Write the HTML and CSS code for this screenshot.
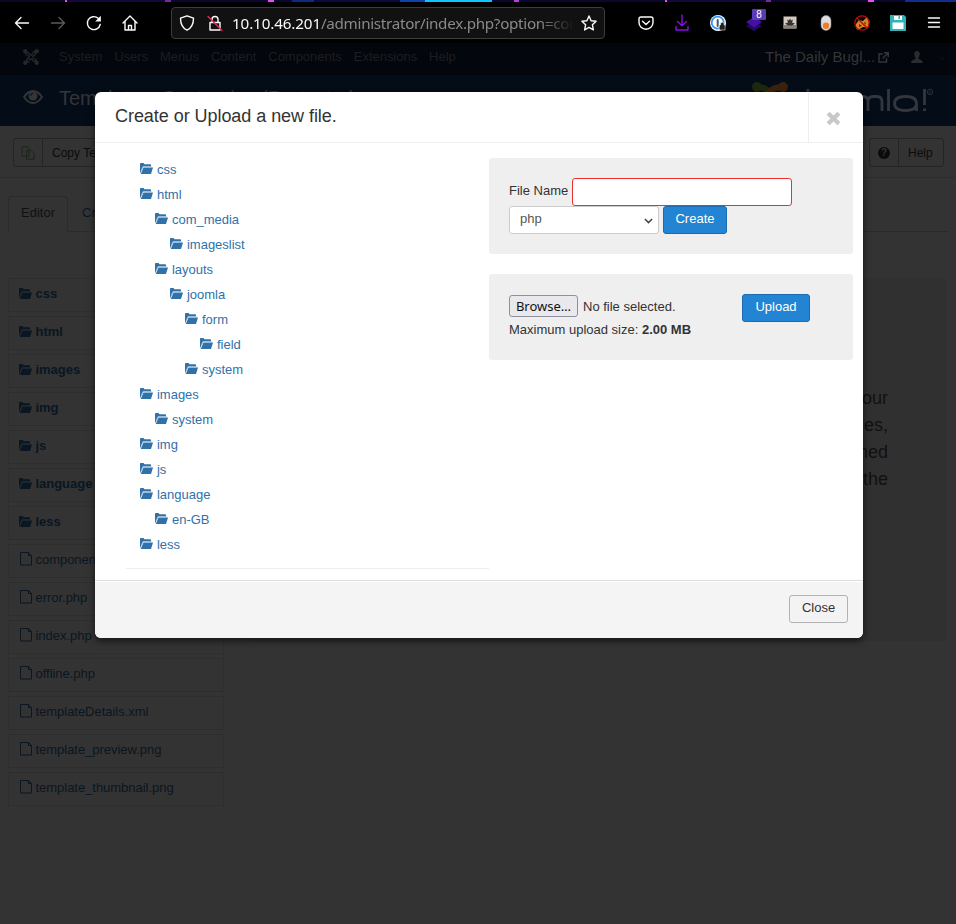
FILE: index.html
```html
<!DOCTYPE html>
<html lang="en">
<head>
<meta charset="utf-8">
<title>Templates: Customise (Protostar)</title>
<link rel="stylesheet" href="styles.css">
</head>
<body>
<svg width="0" height="0" class="defs">
  <symbol id="folder" viewBox="0 0 13 11"><path d="M0 10.500V.8Q0 0 .8 0H3.500l1 1.200h5.700q.8 0 .8.8v1.500H3.300L.7 9z"/><path d="M3.500 4.400h9.500L11 11H.8z"/><path class="fold" d="M1 8.500L2.800 3.800h9"/></symbol>
  <symbol id="file" viewBox="0 0 12 14"><path fill="none" stroke="currentColor" d="M.5.5h8l3 3v9.500H.5zM8.500 .5v3h3"/></symbol>
</svg>
<div class="strip"></div>
<header class="browser">
  <svg class="ico nav1" viewBox="0 0 16 16"><path d="M14.500 8H1.500M7 2.500L1.500 8 7 13.500"/></svg>
  <svg class="ico nav2" viewBox="0 0 16 16"><path d="M1.500 8h13M9 2.500L14.500 8 9 13.500"/></svg>
  <svg class="ico nav3" viewBox="0 0 16 16"><path d="M14.200 9.500a6.500 6.500 0 1 1-2-6.200L14 5"/><path class="solid" d="M14.800 .8v5.700H9.200z"/></svg>
  <svg class="ico nav4" viewBox="0 0 16 16"><path d="M1 8l7-7 7 7M3 6.500V15h10V6.500M6.500 15v-4.500h3V15"/></svg>
  <div class="url">
    <svg class="ico" viewBox="0 0 16 16"><path d="M8 .8L14.500 3.200C14.500 9 12.500 13 8 15.200 3.500 13 1.500 9 1.500 3.200z"/></svg>
    <svg class="ico lock" viewBox="0 0 16 16"><path d="M3 7.500h10V15H3zM5 7.500V4.500a3 3 0 0 1 6 0v3"/><path class="slash" d="M1 1.500l14 14"/></svg>
    <span class="addr"><b>10.10.46.201</b>/administrator/index.php?option=com</span>
    <svg class="ico" viewBox="0 0 16 16"><path d="M8 1l2.100 4.700 5 .6-3.700 3.500 1 5.100L8 12.400l-4.400 2.500 1-5.100L.9 6.300l5-.6z"/></svg>
  </div>
  <div class="exts">
    <svg class="ico" viewBox="0 0 16 16"><path d="M3 2h10q2 0 2 2v3.500a7 6.700 0 0 1-14 0V4q0-2 2-2z"/><path d="M4.500 6.300L8 9.500l3.500-3.200"/></svg>
    <svg class="ico dl" viewBox="0 0 16 16"><path d="M8 0v10.500M3.500 6.500L8 10.800l4.500-4.300M2 11.500V15h12v-3.500"/></svg>
    <svg class="ico flat" viewBox="0 0 16 16"><circle cx="8" cy="8" r="8" fill="#fff"/><circle cx="7.700" cy="7.700" r="6" fill="#fff" stroke="#3a93ee" stroke-width="1.800"/><path stroke="#456" stroke-width="2" d="M7.700 5v6"/><path fill="#222" stroke="#fff" stroke-width=".5" d="M9.500 10h1V9a1.800 1.800 0 0 1 3.600 0v1h1v5H9.500z"/></svg>
    <span class="badged"><svg class="ico flat" viewBox="0 0 16 16"><path fill="#20096c" d="M0 11l8-4.500 8 4.500-8 5z"/><path fill="#4510a3" d="M0 7l8-5 8 5-8 5.500z"/></svg><i>8</i></span>
    <svg class="ico flat" viewBox="0 0 16 16"><path fill="#d5c9c0" d="M1.500 1.500h13v12h-13z"/><path fill="#8a817c" d="M1.500 10h13v3.500h-13z"/><path fill="#333" d="M3 8.500l3-1-1-3 2 1 1-2 1 2 2-1-1 3 3 1-3 2H6z"/></svg>
    <svg class="ico flat" viewBox="0 0 16 16"><rect x="3" y="0.500" width="10" height="15" rx="5" fill="#ddd" stroke="#888" stroke-width=".5"/><circle cx="8" cy="10.700" r="3.200" fill="#f07c25"/></svg>
    <svg class="ico flat" viewBox="0 0 16 16"><path fill="#d78227" d="M2 9l3-4 4 1 4-4 2.500 4-1.500 7-5-1-5 3-2-2z"/><path fill="#4b2b10" d="M5 9l3 2-3 1zM10 7l2 1-1 2z"/><circle cx="8" cy="8" r="7.200" fill="none" stroke="#b90b0b" stroke-width="1.300"/><path stroke="#b90b0b" stroke-width="1.300" d="M3 3l10 10"/></svg>
    <svg class="ico flat" viewBox="0 0 16 16"><path fill="#32b2b4" d="M0 0h14l2 2v14H0z"/><path fill="#fff" d="M2.500 7.500h11V14h-11zM4 1h8v4H4z"/><path fill="#32b2b4" d="M8.500 1H10v3H8.500z"/></svg>
    <svg class="ico burger" viewBox="0 0 16 16"><path d="M2.500 3h11M2.500 7.500h11M2.500 12h11"/></svg>
  </div>
</header>
<div class="page">
  <nav class="topnav">
    <svg class="jicon" viewBox="0 0 16 16"><g fill="none" stroke="#25272a" stroke-width="1.500"><path d="M3 6.500Q2.500 3.200 5.500 4L11.500 10M9.500 3Q13 2.500 12 5.500L6 11.500M13 9.500Q13.500 12.800 10.500 12L4.500 6M6.500 13Q3 13.500 4 10.500L10 4.500"/></g><g fill="#25272a"><circle cx="2.300" cy="2.300" r="2.200"/><circle cx="13.700" cy="2.300" r="2.200"/><circle cx="2.300" cy="13.700" r="2.200"/><circle cx="13.700" cy="13.700" r="2.200"/></g><path fill="#03060c" d="M8 6.300L9.700 8 8 9.700 6.300 8z"/></svg>
    <span>System</span><span>Users</span><span>Menus</span><span>Content</span><span>Components</span><span>Extensions</span><span>Help</span>
    <div class="site">The Daily Bugl...
      <svg class="extl" viewBox="0 0 11 11"><path d="M5 2H1v8h7.500V6M6 .8h4.200V5M10 1L4.500 6.500"/></svg>
      <svg class="user" viewBox="0 0 12 12"><path d="M6 0c2 0 3 1.500 2.700 3.500C8.500 5.500 7.500 6 7.500 7.500c0 1 4 1 4.500 4.500H0c.5-3.500 4.500-3.500 4.500-4.500C4.500 6 3.500 5.500 3.300 3.500 3 1.500 4 0 6 0z"/></svg>
      <em></em>
    </div>
  </nav>
  <div class="titlebar">
    <svg class="eye" viewBox="0 0 20 14"><path fill="none" stroke="#333538" stroke-width="1.900" d="M1 7Q5 1 10 1t9 6q-4 6-9 6T1 7z"/><circle cx="10" cy="6" r="4.500" fill="#333538"/><path stroke="#020a17" fill="none" d="M7.500 6Q7.500 3.500 10 3.300"/></svg>
    <h1>Templates: Customise (Protostar)</h1>
    <svg class="joomla" viewBox="0 0 184 46"><g fill="none" stroke-width="6" stroke-linecap="round"><path stroke="#1c290e" d="M5 6q7-2 12 4l12 12"/><path stroke="#3a220d" d="M31 6Q23 4 17 10L5 22"/></g><circle cx="5" cy="5" r="5" fill="#1c290e"/><circle cx="31" cy="5" r="5" fill="#3a220d"/>
      <g class="word"><path d="M56 7v22M101 29V20q0-5.500 5-5.500h5q5 0 5 5.500v9M116 20q0-5.500 5-5.500h4q5 0 5 5.500v9M136.500 7v22M164.500 29v-7.500q0-7-11-7t-11 7 11 7 11-7M172.500 7v16M172.500 26.500v2.500"/></g><circle class="reg" cx="178" cy="10" r="2.700"/><text x="176.600" y="12">R</text></svg>
  </div>
  <div class="toolbar">
    <div class="btns"><span class="cell"><svg class="copy" viewBox="0 0 14 14"><path d="M1 .7h5l2 2v7.500H1zM5.500 4.700h5l2.500 2.500v6H5.500z"/></svg></span><span>Copy Template</span></div>
    <div class="btns help"><span class="cell"><i>?</i></span><span>Help</span></div>
  </div>
  <div class="tabs"><span class="tab on">Editor</span><span class="tab">Create Overrides</span></div>
  <div class="cols">
    <ul class="files">
      <li class="dir"><svg><use href="#folder"/></svg>css</li>
      <li class="dir"><svg><use href="#folder"/></svg>html</li>
      <li class="dir"><svg><use href="#folder"/></svg>images</li>
      <li class="dir"><svg><use href="#folder"/></svg>img</li>
      <li class="dir"><svg><use href="#folder"/></svg>js</li>
      <li class="dir"><svg><use href="#folder"/></svg>language</li>
      <li class="dir"><svg><use href="#folder"/></svg>less</li>
      <li><svg><use href="#file"/></svg>component.php</li>
      <li><svg><use href="#file"/></svg>error.php</li>
      <li><svg><use href="#file"/></svg>index.php</li>
      <li><svg><use href="#file"/></svg>offline.php</li>
      <li><svg><use href="#file"/></svg>templateDetails.xml</li>
      <li><svg><use href="#file"/></svg>template_preview.png</li>
      <li><svg><use href="#file"/></svg>template_thumbnail.png</li>
    </ul>
    <div class="hero"><p>our<br>es,<br>ned<br>the</p></div>
  </div>
</div>
<section class="modal">
  <div class="mhead"><h3>Create or Upload a new file.</h3><button class="x"><svg viewBox="0 0 14 14"><path d="M2 2l10 10M12 2L2 12"/></svg></button></div>
  <div class="mbody">
    <ul class="tree">
      <li><svg><use href="#folder"/></svg>css</li>
      <li><svg><use href="#folder"/></svg>html
        <ul>
          <li><svg><use href="#folder"/></svg>com_media
            <ul><li><svg><use href="#folder"/></svg>imageslist</li></ul></li>
          <li><svg><use href="#folder"/></svg>layouts
            <ul><li><svg><use href="#folder"/></svg>joomla
              <ul><li><svg><use href="#folder"/></svg>form
                <ul><li><svg><use href="#folder"/></svg>field</li></ul></li>
              <li><svg><use href="#folder"/></svg>system</li></ul></li></ul></li>
        </ul></li>
      <li><svg><use href="#folder"/></svg>images
        <ul><li><svg><use href="#folder"/></svg>system</li></ul></li>
      <li><svg><use href="#folder"/></svg>img</li>
      <li><svg><use href="#folder"/></svg>js</li>
      <li><svg><use href="#folder"/></svg>language
        <ul><li><svg><use href="#folder"/></svg>en-GB</li></ul></li>
      <li><svg><use href="#folder"/></svg>less</li>
    </ul>
    <div class="forms">
      <div class="well create">
        <div class="row"><label>File Name</label><input type="text" class="name"></div>
        <div class="row"><div class="select">php<svg viewBox="0 0 10 6"><path d="M1 .8l4 4 4-4"/></svg></div><button class="blue">Create</button></div>
      </div>
      <div class="well upload">
        <div><div class="row pick"><button class="browse">Browse…</button><span>No file selected.</span></div>
        <p>Maximum upload size: <b>2.00 MB</b></p></div>
        <button class="blue">Upload</button>
      </div>
    </div>
  </div>
  <div class="mfoot"><button class="close">Close</button></div>
</section>
</body>
</html>
```
FILE: styles.css
```css
* { box-sizing: border-box; }
body { margin: 0; width: 956px; height: 924px; overflow: hidden; position: relative; background: #333; font: 13px/18px "Liberation Sans", Arial, sans-serif; color: #333; }
ul { list-style: none; margin: 0; padding: 0; }
h1, h3, p { margin: 0; font-weight: normal; }
button { font: inherit; }
.defs { position: absolute; }
.strip { height: 2px; background: linear-gradient(90deg, #0c0524 0 65px, #e64bf0 65px 67px, #12083a 67px 165px, #7a2b9a 165px 171px, #0b0630 171px 268px, #e84df2 268px 274px, #0b0630 274px 292px, #0e2a80 292px 314px, #0b0a40 314px 400px, #123fae 400px 425px, #12c3fb 425px 492px, #0b0630 492px 514px, #c13bd8 514px 519px, #0b0630 519px 665px, #e64bf0 665px 667px, #12083a 667px 766px, #7a2b9a 766px 771px, #0b0630 771px 868px, #e84df2 868px 874px, #0b0630 874px 905px, #0e2f8c 905px); }
.browser { height: 41px; background: #000; display: flex; align-items: center; padding: 0 14px; }
.ico { width: 16px; height: 16px; flex: none; fill: none; stroke: #fbfbfe; stroke-width: 1.4; stroke-linecap: round; stroke-linejoin: round; overflow: visible; }
.ico .solid { fill: #fbfbfe; stroke: none; }
.nav2 { margin-left: 20px; stroke: #5b5b5f; }
.nav3, .nav4 { margin-left: 20px; }
.url { width: 434px; height: 32px; margin-left: 33px; border: 1px solid #3c3c3c; border-radius: 4px; background: #111; display: flex; align-items: center; padding: 0 7px; }
.lock { margin-left: 12px; }
.ico .slash { stroke: #e22850; }
.addr { flex: 1; margin: 0 7px 0 9px; overflow: hidden; white-space: nowrap; font: 15.2px/24px "Noto Sans", sans-serif; letter-spacing: -.29px; color: #8a8a8c; -webkit-mask-image: linear-gradient(90deg, #000 90%, transparent); mask-image: linear-gradient(90deg, #000 90%, transparent); }
.addr b { font-weight: normal; color: #fbfbfe; letter-spacing: -.12px; }
.exts { display: flex; gap: 20px; margin-left: 33px; }
.dl { stroke: #8a0de8; }
.flat { stroke: none; }
.badged { position: relative; height: 16px; }
.badged i { position: absolute; left: 6px; top: -6px; width: 14px; height: 11px; background: #5b3bb5; border-radius: 1px; color: #fff; font: 10px/11px "Liberation Sans", sans-serif; text-align: center; }
.topnav { height: 32px; background: #03060c; border-bottom: 1px solid #010409; display: flex; align-items: center; gap: 12px; padding: 0 0 3px 23px; color: #1c1e20; letter-spacing: -.025px; }
.jicon { width: 16px; height: 16px; margin-right: 8px; }
.site { margin-left: auto; width: 191px; font-size: 15px; color: #333538; display: flex; align-items: center; letter-spacing: 0; }
.extl { width: 11px; height: 11px; margin-left: 3px; fill: none; stroke: #333538; stroke-width: 1.500; }
.user { width: 12px; height: 12px; margin-left: 22px; fill: #2a2d30; }
.site em { margin: 4px 0 0 15px; border: 4px solid transparent; border-top-color: #0a0b0d; border-bottom: 0; }
.titlebar { height: 51px; background: #040c18; display: flex; align-items: flex-start; padding: 7px 20px 0 23px; }
.eye { width: 20px; height: 14px; margin-top: 8px; }
.titlebar h1 { font-size: 20px; line-height: 32px; margin-left: 16px; color: #333538; }
.joomla { width: 184px; height: 46px; margin-left: auto; }
.word { fill: none; stroke: #33373d; stroke-width: 2.800; }
.joomla text { fill: #33373d; font-size: 4px; }
.reg { fill: none; stroke: #33373d; stroke-width: .8; }
.toolbar { height: 52px; padding: 12px; border-bottom: 1px solid #2c2c2c; display: flex; justify-content: space-between; align-items: flex-start; }
.btns { height: 29px; display: flex; border: 1px solid #242424; border-radius: 3px; line-height: 28px; font-size: 12px; color: #0b0b0b; margin-left: 1px; }
.btns span { padding: 0 9px; }
.btns .cell { width: 29px; padding: 0; border-right: 1px solid #242424; display: flex; align-items: center; justify-content: center; }
.help { width: 75px; }
.btns i { width: 12px; height: 12px; border-radius: 6px; background: #0b0b0b; color: #333; font: bold 10px/12px "Liberation Sans", sans-serif; text-align: center; }
.copy { width: 14px; height: 14px; fill: none; stroke: #1b2719; }
.tabs { height: 36px; margin: 18px 8px 0; border-bottom: 1px solid #2b2b2b; display: flex; }
.tab { padding: 8px 13px; color: #0a1622; height: 36px; margin-right: 2px; white-space: nowrap; }
.tab.on { width: 60px; margin-right: 1px; border: 1px solid #2b2b2b; border-bottom-color: #333; border-radius: 4px 4px 0 0; padding: 7px 12px; color: #111; }
.cols { display: flex; justify-content: space-between; align-items: flex-start; padding: 46px 9px 0 8px; }
.files { width: 216px; }
.files li { height: 34px; margin-bottom: 4px; border: 1px solid #2e2e2e; display: flex; align-items: flex-start; padding: 6px 10px; color: #0a1622; letter-spacing: -.03px; }
.files svg { width: 12px; height: 14px; margin: 1px 4px 0 .5px; }
.files .dir { font-weight: bold; --fold: #1d2a35; }
.files .dir svg { width: 13px; height: 11px; margin: 2.500px 3.500px 0 0; fill: #0a1622; }
.fold { stroke: var(--fold); stroke-width: .9; fill: none; }
.hero { width: 700px; height: 363px; border-radius: 6px; background: #303030; padding: 107px 59px; text-align: right; color: #101010; font-size: 18px; line-height: 27px; }
.modal { position: absolute; left: 95px; top: 92px; width: 768px; height: 546px; background: #fff; border-radius: 6px; box-shadow: 0 3px 7px rgba(0,0,0,.6); overflow: hidden; display: flex; flex-direction: column; }
.mhead { height: 51px; border-bottom: 1px solid #eee; display: flex; justify-content: space-between; }
.mhead h3 { font-size: 18px; line-height: 48px; padding-left: 20px; letter-spacing: -.05px; }
.x { width: 55px; border: 0; border-left: 1px solid #eee; background: none; padding: 2px 5px 0 0; }
.x svg { width: 15px; height: 15px; fill: none; stroke: #c8c8c8; stroke-width: 4; vertical-align: middle; }
.mbody { flex: 1; display: flex; align-items: flex-start; padding: 15px 10px 0 31px; }
.tree { --fold: #a5c1d9; width: 363px; height: 411px; border-bottom: 1px solid #eee; padding-left: 14.400px; color: #3071a9; line-height: 25px; letter-spacing: -.01px; }
.tree > li:first-child { margin-top: -1px; }
.tree ul { padding-left: 15px; }
.tree svg { width: 13px; height: 11px; margin-right: 3.600px; fill: #3071a9; vertical-align: 0; }
.forms { flex: 1; }
.well { background: #efefef; border-radius: 3px; padding: 20px; margin-bottom: 20px; }
.create { height: 96px; }
.row { display: flex; height: 28px; gap: 4px; }
.row label { line-height: 26px; width: 59px; white-space: nowrap; }
.name { width: 220px; height: 28px; border: 1px solid #e9322d; border-radius: 3px; background: #fff; outline: none; }
.select { width: 150px; height: 28px; border: 1px solid #ccc; border-radius: 3px; background: #fff; color: #555; padding: 0 5px 0 10px; line-height: 24px; display: flex; justify-content: space-between; align-items: flex-start; }
.select svg { width: 9px; height: 6px; margin-top: 11px; fill: none; stroke: #444; stroke-width: 1.700; }
.blue { height: 28px; width: 64px; padding: 0 0 2px; background: #2384d3; border: 1px solid #1a6aad; border-radius: 3px; color: #fff; }
.upload { height: 86px; display: flex; justify-content: space-between; padding-right: 43px; }
.upload .blue { width: 68px; }
.pick { height: 24px; gap: 5px; padding-top: 1px; line-height: 24px; }
.browse { width: 69px; height: 22px; border: 1px solid #8f8f9d; border-radius: 3px; background: #e9e9ed; color: #111; padding: 0; font: 13px/20px "Noto Sans", sans-serif; }
.upload p { margin-top: 3px; }
.mfoot { height: 58px; background: #f4f4f4; border-top: 1px solid #ddd; box-shadow: inset 0 1px 0 #fff; padding: 14px 15px; display: flex; justify-content: flex-end; }
.close { width: 59px; height: 28px; padding: 0 0 2px; border: 1px solid #b3b3b3; border-radius: 3px; background: #f3f3f3; color: #333; }
```
